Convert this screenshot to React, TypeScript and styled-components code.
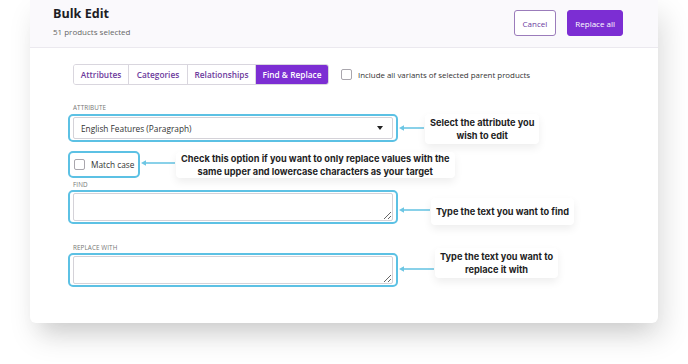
import React from 'react';
import styled, { createGlobalStyle } from 'styled-components';

const GlobalStyle = createGlobalStyle`
    html, body {
        margin: 0;
        padding: 0;
        background: #ffffff;
    }
    body {
        font-family: 'Open Sans', 'Liberation Sans', sans-serif;
        color: #333;
    }
`;

const PURPLE = '#7c2ed3';
const CYAN = '#5cc1e4';

const Page = styled.div`
    width: 688px;
    height: 364px;
    padding: 0 30px;
    box-sizing: border-box;
    overflow: hidden;
`;

const Card = styled.div`
    width: 628px;
    height: 323px;
    background: #fff;
    border-radius: 0 0 6px 6px;
    box-shadow: 6px 14px 28px rgba(0, 0, 0, 0.13), 0 18px 22px -14px rgba(0, 0, 0, 0.1);
    display: flex;
    flex-direction: column;
`;

const Header = styled.div`
    flex: none;
    height: 48px;
    box-sizing: border-box;
    background: #faf9fc;
    border-bottom: 1px solid #ebe9ef;
    display: flex;
    align-items: flex-start;
    justify-content: space-between;
    padding: 5px 35px 0 23px;
`;

const TitleBlock = styled.div`
    display: flex;
    flex-direction: column;
`;

const Title = styled.h1`
    margin: 0;
    font-size: 12.6px;
    line-height: 18px;
    font-weight: 700;
    color: #1d1d24;
`;

const Subtitle = styled.div`
    margin-top: 3px;
    font-size: 8px;
    line-height: 11px;
    color: #666;
`;

const Actions = styled.div`
    display: flex;
    gap: 11px;
    margin-top: 5px;
`;

const Button = styled.button<{ $primary?: boolean }>`
    height: 26px;
    padding: 0 ${(p) => (p.$primary ? '7px' : '8px')};
    border-radius: 3px;
    font-family: 'Open Sans', 'Liberation Sans', sans-serif;
    font-size: 8px;
    font-weight: 500;
    cursor: pointer;
    background: ${(p) => (p.$primary ? PURPLE : '#fff')};
    color: ${(p) => (p.$primary ? '#fff' : '#6b3a9e')};
    border: 1px solid ${(p) => (p.$primary ? PURPLE : '#9b7cbb')};
`;

const Body = styled.div`
    padding: 16px 0 0 43px;
    display: flex;
    flex-direction: column;
`;

const TopRow = styled.div`
    display: flex;
    align-items: center;
    gap: 12px;
`;

const Tabs = styled.div`
    display: flex;
    border: 1px solid #d9d6de;
    border-radius: 3px;
    overflow: hidden;
`;

const Tab = styled.div<{ $active?: boolean; $w: number }>`
    width: ${(p) => p.$w}px;
    height: 19px;
    display: flex;
    align-items: center;
    justify-content: center;
    font-size: 8.3px;
    font-weight: 600;
    color: ${(p) => (p.$active ? '#fff' : '#6c3a9c')};
    background: ${(p) => (p.$active ? PURPLE : '#fff')};
    & + & {
        border-left: 1px solid #d9d6de;
    }
`;

const Check = styled.span`
    width: 9px;
    height: 9px;
    border: 1px solid #a9a6ad;
    border-radius: 2px;
    background: #fff;
    flex: none;
`;

const CheckLabel = styled.label`
    display: flex;
    align-items: center;
    gap: 6px;
    font-size: 7.9px;
    color: #333;
`;

const FieldLabel = styled.div<{ $top: number }>`
    margin-top: ${(p) => p.$top}px;
    height: 10px;
    font-size: 6.3px;
    line-height: 10px;
    letter-spacing: 0.1px;
    text-transform: uppercase;
    color: #777;
`;

const Row = styled.div<{ $top?: number }>`
    display: flex;
    align-items: flex-start;
    margin-top: ${(p) => p.$top ?? 0}px;
`;

const Highlight = styled.div`
    margin-left: -5px;
    border: 2px solid ${CYAN};
    border-radius: 5px;
    padding: 1px 3px;
    display: flex;
    flex: none;
`;

const Select = styled.div`
    width: 320px;
    height: 22px;
    box-sizing: border-box;
    border: 1px solid #d4d2d8;
    border-radius: 2px;
    background: #fff;
    display: flex;
    align-items: center;
    justify-content: space-between;
    padding: 0 9px 0 7px;
    font-size: 8.3px;
    color: #333;
`;

const Caret = styled.span`
    width: 0;
    height: 0;
    border-left: 3.5px solid transparent;
    border-right: 3.5px solid transparent;
    border-top: 4px solid #222;
`;

const TextArea = styled.textarea`
    width: 320px;
    height: 28px;
    box-sizing: border-box;
    border: 1px solid #d4d2d8;
    border-radius: 2px;
    resize: vertical;
    display: block;
    margin: 0;
    font-family: inherit;
`;

const MatchBox = styled.label`
    width: 62px;
    height: 21px;
    box-sizing: border-box;
    display: flex;
    align-items: center;
    gap: 6px;
    padding-left: 1px;
    white-space: nowrap;
    font-size: 8.3px;
    color: #333;
`;

const ArrowSvg = styled.svg<{ $top: number }>`
    flex: none;
    margin-top: ${(p) => p.$top}px;
`;

const Callout = styled.div<{ $top: number; $pad?: number }>`
    flex: none;
    margin-top: ${(p) => p.$top}px;
    padding: ${(p) => p.$pad ?? 2}px 5px;
    white-space: nowrap;
    background: #fff;
    border-radius: 4px;
    box-shadow: 0 4px 9px rgba(0, 0, 0, 0.07);
    font-family: Inter, 'Liberation Sans', sans-serif;
    font-weight: 700;
    font-size: 9.2px;
    line-height: 13px;
    color: #1e1e24;
    text-align: center;
`;

const Arrow = ({ width, top }: { width: number; top: number }) => (
    <ArrowSvg $top={top} width={width} height={8} viewBox={`0 0 ${width} 8`}>
        <line x1={4} y1={4} x2={width - 1} y2={4} stroke="#6cc6e4" strokeWidth={1.6} />
        <path d="M1 4 L6 1.2 L6 6.8 Z" fill="#6cc6e4" />
    </ArrowSvg>
);

const App: React.FC = () => (
    <>
        <GlobalStyle />
        <Page>
            <Card>
                <Header>
                    <TitleBlock>
                        <Title>Bulk Edit</Title>
                        <Subtitle>51 products selected</Subtitle>
                    </TitleBlock>
                    <Actions>
                        <Button>Cancel</Button>
                        <Button $primary>Replace all</Button>
                    </Actions>
                </Header>
                <Body>
                    <TopRow>
                        <Tabs>
                            <Tab $w={54}>Attributes</Tab>
                            <Tab $w={58}>Categories</Tab>
                            <Tab $w={67}>Relationships</Tab>
                            <Tab $w={72} $active>
                                Find &amp; Replace
                            </Tab>
                        </Tabs>
                        <CheckLabel>
                            <Check />
                            Include all variants of selected parent products
                        </CheckLabel>
                    </TopRow>

                    <FieldLabel $top={18}>Attribute</FieldLabel>
                    <Row $top={1}>
                        <Highlight>
                            <Select>
                                English Features (Paragraph)
                                <Caret />
                            </Select>
                        </Highlight>
                        <Arrow width={27} top={10} />
                        <Callout $top={0}>
                            Select the attribute you
                            <br />
                            wish to edit
                        </Callout>
                    </Row>

                    <Row $top={7}>
                        <Highlight>
                            <MatchBox>
                                <Check />
                                Match case
                            </MatchBox>
                        </Highlight>
                        <Arrow width={36} top={8} />
                        <Callout $top={1} $pad={0}>
                            Check this option if you want to only replace values with the
                            <br />
                            same upper and lowercase characters as your target
                        </Callout>
                    </Row>

                    <FieldLabel $top={2}>Find</FieldLabel>
                    <Row>
                        <Highlight>
                            <TextArea />
                        </Highlight>
                        <Arrow width={33} top={16} />
                        <Callout $top={8} $pad={7}>
                            Type the text you want to find
                        </Callout>
                    </Row>

                    <FieldLabel $top={18}>Replace with</FieldLabel>
                    <Row>
                        <Highlight>
                            <TextArea />
                        </Highlight>
                        <Arrow width={37} top={12} />
                        <Callout $top={-5}>
                            Type the text you want to
                            <br />
                            replace it with
                        </Callout>
                    </Row>
                </Body>
            </Card>
        </Page>
    </>
);

export default App;
